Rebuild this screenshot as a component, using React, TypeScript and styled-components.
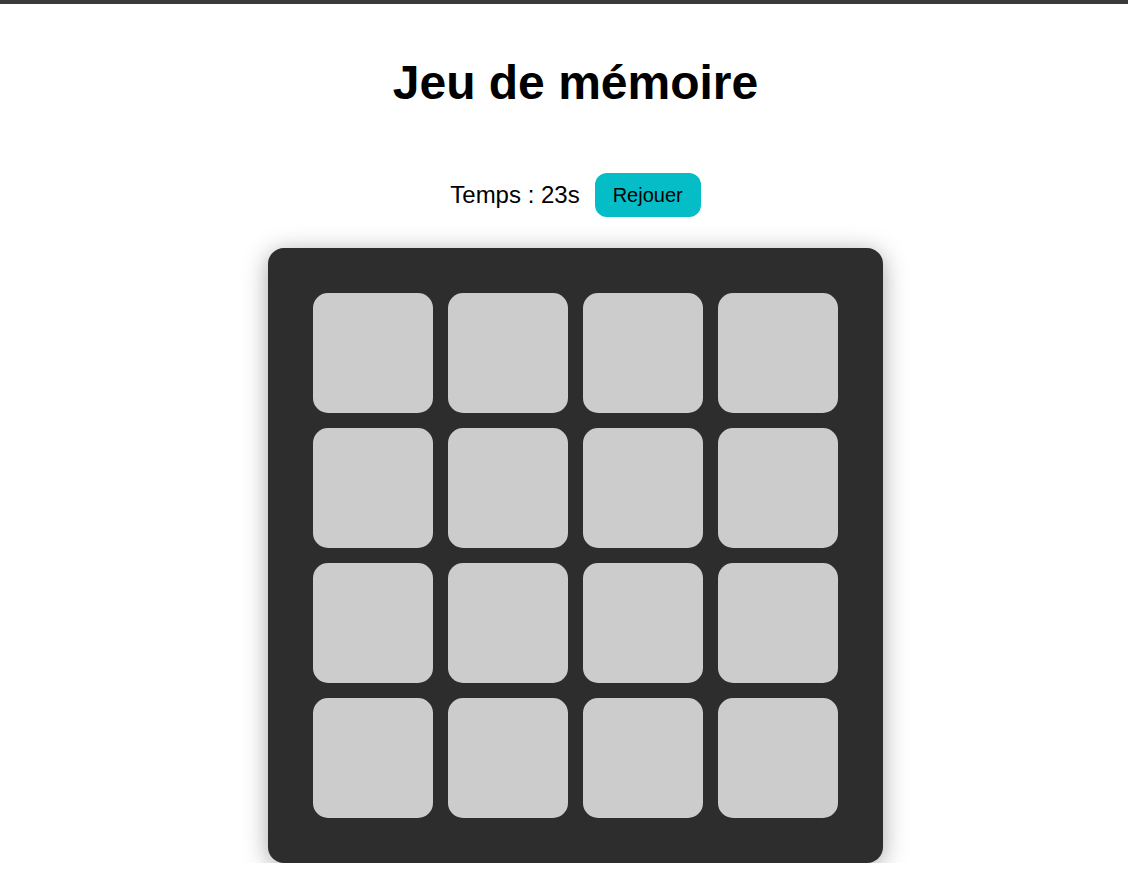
import React from "react";
import styled, { createGlobalStyle } from "styled-components";

const GlobalStyle = createGlobalStyle`
  html, body {
    margin: 0;
    padding: 0;
    background: #ffffff;
    font-family: "Liberation Sans", Arial, sans-serif;
    color: #000;
  }
`;

const TopBar = styled.div`
  height: 4px;
  background: #3a3a3a;
`;

const Page = styled.main`
  display: flex;
  flex-direction: column;
  align-items: center;
  padding-top: 51px;
  padding-left: 23px;
`;

const Title = styled.h1`
  margin: 0;
  font-size: 48px;
  font-weight: 700;
  line-height: 55px;
`;

const Controls = styled.div`
  display: flex;
  align-items: center;
  gap: 15px;
  margin-top: 63px;
  height: 44px;
`;

const Timer = styled.span`
  font-size: 24px;
`;

const ReplayButton = styled.button`
  height: 44px;
  padding: 0 18px;
  border: none;
  border-radius: 12px;
  background: #04bdc7;
  color: #000;
  font-family: "Liberation Sans", Arial, sans-serif;
  font-size: 20px;
  cursor: pointer;
`;

const Board = styled.div`
  margin-top: 31px;
  display: grid;
  grid-template-columns: repeat(4, 120px);
  grid-auto-rows: 120px;
  gap: 15px;
  padding: 45px;
  background: #2d2d2d;
  border-radius: 16px;
  box-shadow: 0 4px 24px rgba(0, 0, 0, 0.35);
`;

const Card = styled.div`
  background: #cccccc;
  border-radius: 15px;
  cursor: pointer;
`;

export default function App() {
  const cards = Array.from({ length: 16 }, (_, i) => i);
  return (
    <>
      <GlobalStyle />
      <TopBar />
      <Page>
        <Title>Jeu de mémoire</Title>
        <Controls>
          <Timer>Temps : 23s</Timer>
          <ReplayButton>Rejouer</ReplayButton>
        </Controls>
        <Board>
          {cards.map((c) => (
            <Card key={c} />
          ))}
        </Board>
      </Page>
    </>
  );
}
